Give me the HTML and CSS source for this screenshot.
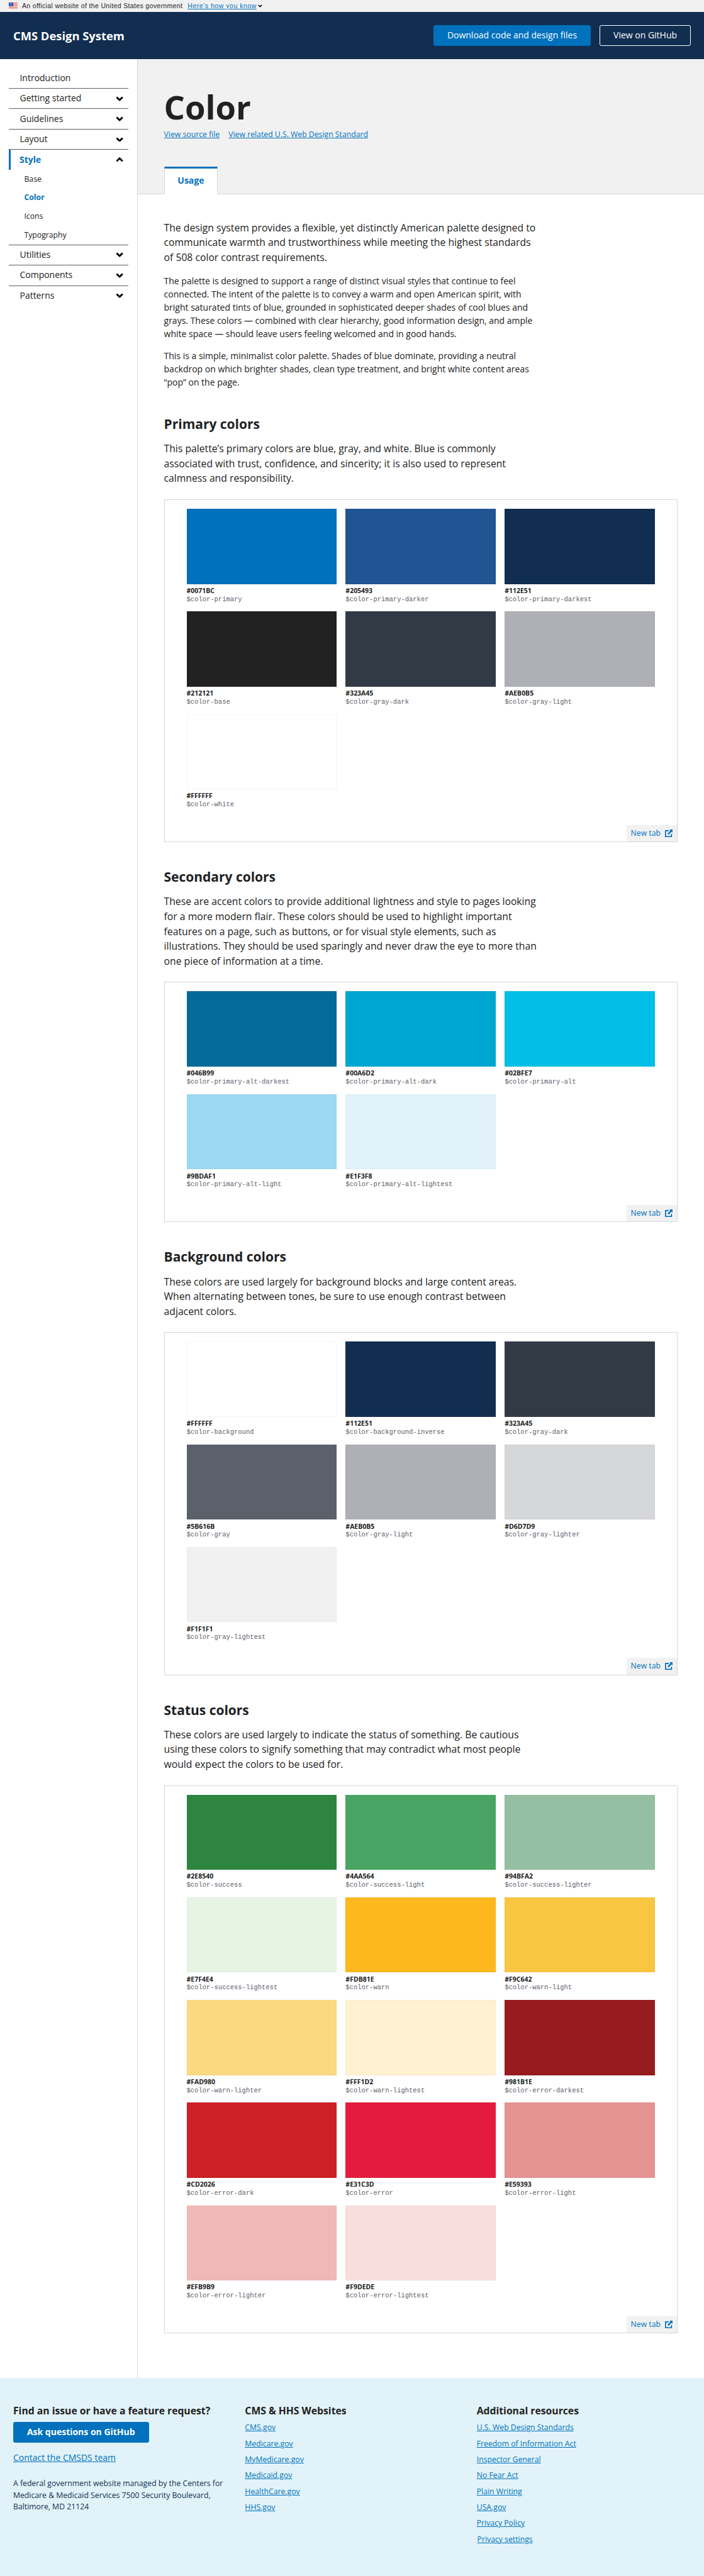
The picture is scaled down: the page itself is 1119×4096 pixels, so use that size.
FILE: index.html
```html
<!DOCTYPE html>
<html lang="en">
<head>
<meta charset="utf-8">
<title>Color - CMS Design System</title>
<link rel="stylesheet" href="styles.css">
</head>
<body>
<svg width="0" height="0" class="sprite" aria-hidden="true">
  <symbol id="chevron" viewBox="0 0 14 9"><path d="M1.6 1.7 7 7l5.4-5.3" fill="none" stroke="#000" stroke-width="3.2"/></symbol>
  <symbol id="external" viewBox="0 0 14 14"><path d="M7 2.2H1v10.8H11.8V8" fill="none" stroke="#0071bc" stroke-width="2"/><path d="M8 0h6v6l-2-2-5.4 5.4-2-2L10 2z" fill="#0071bc"/></symbol>
</svg>

<div class="gov">
  <svg class="flag" viewBox="0 0 16 11"><path fill="#fff" d="M0 0h16v11H0z"/><path fill="#db3e1f" d="M0 0h16v1H0zM0 2h16v1H0zM0 4h16v1H0zM0 6h16v1H0zM0 8h16v1H0zM0 10h16v1H0z"/><path fill="#1e33b1" d="M0 0h8v7H0z"/><path fill="#fff" d="M1 1h1v1H1zM3 1h1v1H3zM5 1h1v1H5zM2 3h1v1H2zM4 3h1v1H4zM6 3h1v1H6zM1 5h1v1H1zM3 5h1v1H3zM5 5h1v1H5z"/></svg>
  <span class="gov-text">An official website of the United States government</span>
  <a href="#" class="gov-link">Here’s how you know</a>
  <svg class="gov-chevron"><use href="#chevron"/></svg>
</div>

<header class="header">
  <div class="brand">CMS Design System</div>
  <nav class="actions">
    <a class="btn btn-primary" href="#">Download code and design files</a>
    <a class="btn btn-outline" href="#">View on GitHub</a>
  </nav>
</header>

<div class="layout">
  <aside class="sidebar">
    <ul class="nav">
      <li><a href="#">Introduction</a></li>
      <li><a href="#">Getting started<svg class="chev"><use href="#chevron"/></svg></a></li>
      <li><a href="#">Guidelines<svg class="chev"><use href="#chevron"/></svg></a></li>
      <li><a href="#">Layout<svg class="chev"><use href="#chevron"/></svg></a></li>
      <li><a href="#" class="current">Style<svg class="chev up"><use href="#chevron"/></svg></a>
        <ul class="subnav">
          <li>Base</li>
          <li class="active">Color</li>
          <li>Icons</li>
          <li>Typography</li>
        </ul>
      </li>
      <li><a href="#">Utilities<svg class="chev"><use href="#chevron"/></svg></a></li>
      <li><a href="#">Components<svg class="chev"><use href="#chevron"/></svg></a></li>
      <li><a href="#">Patterns<svg class="chev"><use href="#chevron"/></svg></a></li>
    </ul>
  </aside>

  <main class="main">
    <div class="page-head">
      <h1>Color</h1>
      <div class="source-links"><a href="#">View source file</a><a href="#">View related U.S. Web Design Standard</a></div>
      <div class="tabs"><a class="tab" href="#">Usage</a></div>
    </div>

    <div class="content">
      <p class="lead">The design system provides a flexible, yet distinctly American palette designed to<br>communicate warmth and trustworthiness while meeting the highest standards<br>of 508 color contrast requirements.</p>
      <p class="first">The palette is designed to support a range of distinct visual styles that continue to feel<br>connected. The intent of the palette is to convey a warm and open American spirit, with<br>bright saturated tints of blue, grounded in sophisticated deeper shades of cool blues and<br>grays. These colors — combined with clear hierarchy, good information design, and ample<br>white space — should leave users feeling welcomed and in good hands.</p>
      <p>This is a simple, minimalist color palette. Shades of blue dominate, providing a neutral<br>backdrop on which brighter shades, clean type treatment, and bright white content areas<br>“pop” on the page.</p>

      <section>
        <h2>Primary colors</h2>
        <p class="lead">This palette’s primary colors are blue, gray, and white. Blue is commonly<br>associated with trust, confidence, and sincerity; it is also used to represent<br>calmness and responsibility.</p>
        <div class="example">
          <div class="swatches">
            <div class="swatch"><i style="background:#0071bc"></i><b>#0071BC</b><code>$color-primary</code></div>
            <div class="swatch"><i style="background:#205493"></i><b>#205493</b><code>$color-primary-darker</code></div>
            <div class="swatch"><i style="background:#112e51"></i><b>#112E51</b><code>$color-primary-darkest</code></div>
            <div class="swatch"><i style="background:#212121"></i><b>#212121</b><code>$color-base</code></div>
            <div class="swatch"><i style="background:#323a45"></i><b>#323A45</b><code>$color-gray-dark</code></div>
            <div class="swatch"><i style="background:#aeb0b5"></i><b>#AEB0B5</b><code>$color-gray-light</code></div>
            <div class="swatch"><i style="background:#ffffff"></i><b>#FFFFFF</b><code>$color-white</code></div>
          </div>
          <a class="newtab" href="#">New tab<svg><use href="#external"/></svg></a>
        </div>
      </section>

      <section>
        <h2>Secondary colors</h2>
        <p class="lead">These are accent colors to provide additional lightness and style to pages looking<br>for a more modern flair. These colors should be used to highlight important<br>features on a page, such as buttons, or for visual style elements, such as<br>illustrations. They should be used sparingly and never draw the eye to more than<br>one piece of information at a time.</p>
        <div class="example">
          <div class="swatches">
            <div class="swatch"><i style="background:#046b99"></i><b>#046B99</b><code>$color-primary-alt-darkest</code></div>
            <div class="swatch"><i style="background:#00a6d2"></i><b>#00A6D2</b><code>$color-primary-alt-dark</code></div>
            <div class="swatch"><i style="background:#02bfe7"></i><b>#02BFE7</b><code>$color-primary-alt</code></div>
            <div class="swatch"><i style="background:#9bdaf1"></i><b>#9BDAF1</b><code>$color-primary-alt-light</code></div>
            <div class="swatch"><i style="background:#e1f3f8"></i><b>#E1F3F8</b><code>$color-primary-alt-lightest</code></div>
          </div>
          <a class="newtab" href="#">New tab<svg><use href="#external"/></svg></a>
        </div>
      </section>

      <section>
        <h2>Background colors</h2>
        <p class="lead">These colors are used largely for background blocks and large content areas.<br>When alternating between tones, be sure to use enough contrast between<br>adjacent colors.</p>
        <div class="example">
          <div class="swatches">
            <div class="swatch"><i style="background:#ffffff"></i><b>#FFFFFF</b><code>$color-background</code></div>
            <div class="swatch"><i style="background:#112e51"></i><b>#112E51</b><code>$color-background-inverse</code></div>
            <div class="swatch"><i style="background:#323a45"></i><b>#323A45</b><code>$color-gray-dark</code></div>
            <div class="swatch"><i style="background:#5b616b"></i><b>#5B616B</b><code>$color-gray</code></div>
            <div class="swatch"><i style="background:#aeb0b5"></i><b>#AEB0B5</b><code>$color-gray-light</code></div>
            <div class="swatch"><i style="background:#d6d7d9"></i><b>#D6D7D9</b><code>$color-gray-lighter</code></div>
            <div class="swatch"><i style="background:#f1f1f1"></i><b>#F1F1F1</b><code>$color-gray-lightest</code></div>
          </div>
          <a class="newtab" href="#">New tab<svg><use href="#external"/></svg></a>
        </div>
      </section>

      <section>
        <h2>Status colors</h2>
        <p class="lead">These colors are used largely to indicate the status of something. Be cautious<br>using these colors to signify something that may contradict what most people<br>would expect the colors to be used for.</p>
        <div class="example">
          <div class="swatches">
            <div class="swatch"><i style="background:#2e8540"></i><b>#2E8540</b><code>$color-success</code></div>
            <div class="swatch"><i style="background:#4aa564"></i><b>#4AA564</b><code>$color-success-light</code></div>
            <div class="swatch"><i style="background:#94bfa2"></i><b>#94BFA2</b><code>$color-success-lighter</code></div>
            <div class="swatch"><i style="background:#e7f4e4"></i><b>#E7F4E4</b><code>$color-success-lightest</code></div>
            <div class="swatch"><i style="background:#fdb81e"></i><b>#FDB81E</b><code>$color-warn</code></div>
            <div class="swatch"><i style="background:#f9c642"></i><b>#F9C642</b><code>$color-warn-light</code></div>
            <div class="swatch"><i style="background:#fad980"></i><b>#FAD980</b><code>$color-warn-lighter</code></div>
            <div class="swatch"><i style="background:#fff1d2"></i><b>#FFF1D2</b><code>$color-warn-lightest</code></div>
            <div class="swatch"><i style="background:#981b1e"></i><b>#981B1E</b><code>$color-error-darkest</code></div>
            <div class="swatch"><i style="background:#cd2026"></i><b>#CD2026</b><code>$color-error-dark</code></div>
            <div class="swatch"><i style="background:#e31c3d"></i><b>#E31C3D</b><code>$color-error</code></div>
            <div class="swatch"><i style="background:#e59393"></i><b>#E59393</b><code>$color-error-light</code></div>
            <div class="swatch"><i style="background:#efb9b9"></i><b>#EFB9B9</b><code>$color-error-lighter</code></div>
            <div class="swatch"><i style="background:#f9dede"></i><b>#F9DEDE</b><code>$color-error-lightest</code></div>
          </div>
          <a class="newtab" href="#">New tab<svg><use href="#external"/></svg></a>
        </div>
      </section>
    </div>
  </main>
</div>

<footer class="footer">
  <div>
    <h3>Find an issue or have a feature request?</h3>
    <a class="btn btn-primary btn-bold" href="#">Ask questions on GitHub</a>
    <a class="contact" href="#">Contact the CMSDS team</a>
    <p class="address">A federal government website managed by the Centers for<br>Medicare &amp; Medicaid Services 7500 Security Boulevard,<br>Baltimore, MD 21124</p>
  </div>
  <div>
    <h3>CMS &amp; HHS Websites</h3>
    <ul class="links">
      <li><a href="#">CMS.gov</a></li>
      <li><a href="#">Medicare.gov</a></li>
      <li><a href="#">MyMedicare.gov</a></li>
      <li><a href="#">Medicaid.gov</a></li>
      <li><a href="#">HealthCare.gov</a></li>
      <li><a href="#">HHS.gov</a></li>
    </ul>
  </div>
  <div>
    <h3>Additional resources</h3>
    <ul class="links">
      <li><a href="#">U.S. Web Design Standards</a></li>
      <li><a href="#">Freedom of Information Act</a></li>
      <li><a href="#">Inspector General</a></li>
      <li><a href="#">No Fear Act</a></li>
      <li><a href="#">Plain Writing</a></li>
      <li><a href="#">USA.gov</a></li>
      <li><a href="#">Privacy Policy</a></li>
      <li class="settings"><a href="#">Privacy settings</a></li>
    </ul>
  </div>
</footer>
</body>
</html>
```
FILE: styles.css
```css
/* 1rem is ten design pixels; the root size scales the whole page */
html { font-size: 8.744px; }
*, *::before, *::after { box-sizing: border-box; }
body {
  margin: 0;
  background: #fff;
  color: #212121;
  font-family: "Open Sans", "Noto Sans", sans-serif;
  font-size: 1.6rem;
  line-height: 1.5;
}
h1, h2, h3, p, ul { margin: 0; padding: 0; }
ul { list-style: none; }
a { color: #0071bc; }
.sprite { display: block; height: 0; }

.gov {
  display: flex;
  align-items: center;
  height: 2.2rem;
  padding-left: 1.6rem;
  background: #f1f1f1;
  font-family: "Liberation Sans", Helvetica, sans-serif;
  font-size: 1.2rem;
  line-height: 2.2rem;
  white-space: nowrap;
}
.flag { width: 1.6rem; height: 1.1rem; margin: 0 .8rem .2rem 0; }
.gov-text { width: 30.1rem; letter-spacing: .041rem; }
.gov-link { letter-spacing: .062rem; }
.gov-chevron { width: .8rem; height: .55rem; margin-left: .25rem; }

.header {
  display: flex;
  align-items: center;
  justify-content: space-between;
  height: 8.6rem;
  padding: 0 2.4rem;
  background: #112e51;
}
.brand { color: #fff; font-size: 2.1rem; font-weight: 700; }
.actions { display: flex; gap: 1.6rem; }
.btn {
  display: flex;
  align-items: center;
  width: max-content;
  height: 3.8rem;
  padding: 0 2.4rem;
  border: 1px solid #0071bc;
  border-radius: 3px;
  color: #fff;
  font-size: 1.6rem;
  text-decoration: none;
}
.btn-primary { background: #0071bc; }
.btn-outline { border-color: #fff; }
.btn-bold { font-weight: 700; }

.layout { display: flex; height: 421.6rem; }
.sidebar { width: 25rem; padding: 1.6rem 1.6rem 0; border-right: 1px solid #d6d7d9; }
.nav > li + li { border-top: 1px solid #5b616b; }
.nav > li > a {
  display: flex;
  align-items: center;
  justify-content: space-between;
  height: 3.6rem;
  padding: 0 .8rem 0 2rem;
  color: #212121;
  text-decoration: none;
}
.nav > li > a.current {
  padding-left: 1.6rem;
  border-left: .4rem solid #0071bc;
  color: #0071bc;
  font-weight: 700;
}
.chev { width: 1.4rem; height: .9rem; }
.up { transform: rotate(180deg); }
.subnav li { padding-left: 2.8rem; font-size: 1.4rem; line-height: 3.4rem; }
.subnav .active { color: #0071bc; font-weight: 700; }

.main { flex: 1; }
.page-head {
  height: 24.5rem;
  padding: 4.8rem 0 0 4.8rem;
  background: #f1f1f1;
  border-bottom: 1px solid #d6d7d9;
}
h1 { font-size: 6rem; line-height: 7.8rem; }
.source-links { display: flex; gap: 1.6rem; font-size: 1.4rem; line-height: 2.1rem; }
.tabs { display: flex; margin-top: 4.8rem; }
.tab {
  height: 5rem;
  width: 9.8rem;
  border: 1px solid #d6d7d9;
  border-top: .4rem solid #0071bc;
  border-bottom: 0;
  background: #fff;
  font-weight: 700;
  line-height: 4.4rem;
  text-align: center;
  text-decoration: none;
}

.content { padding: 4.8rem 4.8rem 0; white-space: nowrap; }
.content p { margin-top: 1.6rem; line-height: 2.4rem; }
.content .lead { font-size: 1.8rem; line-height: 2.7rem; }
.content > .lead { margin-top: 0; }
.content .first { margin-top: 1.8rem; }
section { margin-top: 4.8rem; }
h2 { font-size: 2.4rem; line-height: 3.12rem; }
.example {
  display: flex;
  flex-direction: column;
  margin-top: 2.4rem;
  padding-top: 1.6rem;
  border: 1px solid #d6d7d9;
}
.swatches {
  display: grid;
  grid-template-columns: repeat(3, 1fr);
  grid-auto-rows: 18.667rem;
  column-gap: 1.6rem;
  padding: 0 4rem;
}
.swatch { display: flex; flex-direction: column; font-size: 1.2rem; }
.swatch i { height: 13.667rem; margin-bottom: .5rem; border: 1px solid rgba(0, 0, 0, .03); }
.swatch b { line-height: 1.56rem; }
.swatch code { color: #5b616b; font-family: "Liberation Mono", monospace; font-size: 1.2rem; line-height: 1.5rem; }
.newtab {
  display: flex;
  align-items: center;
  align-self: flex-end;
  justify-content: space-between;
  width: 9.2rem;
  height: 3rem;
  margin-top: 1.52rem;
  padding: 0 .8rem;
  background: #f1f1f1;
  font-size: 1.4rem;
  text-decoration: none;
}
.newtab svg { width: 1.4rem; height: 1.4rem; }

.footer {
  display: grid;
  grid-template-columns: repeat(3, 42.13rem);
  height: 36rem;
  padding: 4.8rem 2.4rem 0;
  overflow: hidden;
  background: #e1f3f8;
  white-space: nowrap;
}
h3 { font-size: 1.8rem; line-height: 2.34rem; }
.footer .btn { margin-top: .9rem; }
.contact { display: block; margin-top: 1.6rem; }
.address { margin-top: 2.4rem; color: #112e51; font-size: 1.4rem; line-height: 2.1rem; }
.links { margin-top: .9rem; font-size: 1.4rem; }
.links li { line-height: 2.1rem; margin-bottom: .8rem; }
.settings { padding-left: .1rem; }
```
